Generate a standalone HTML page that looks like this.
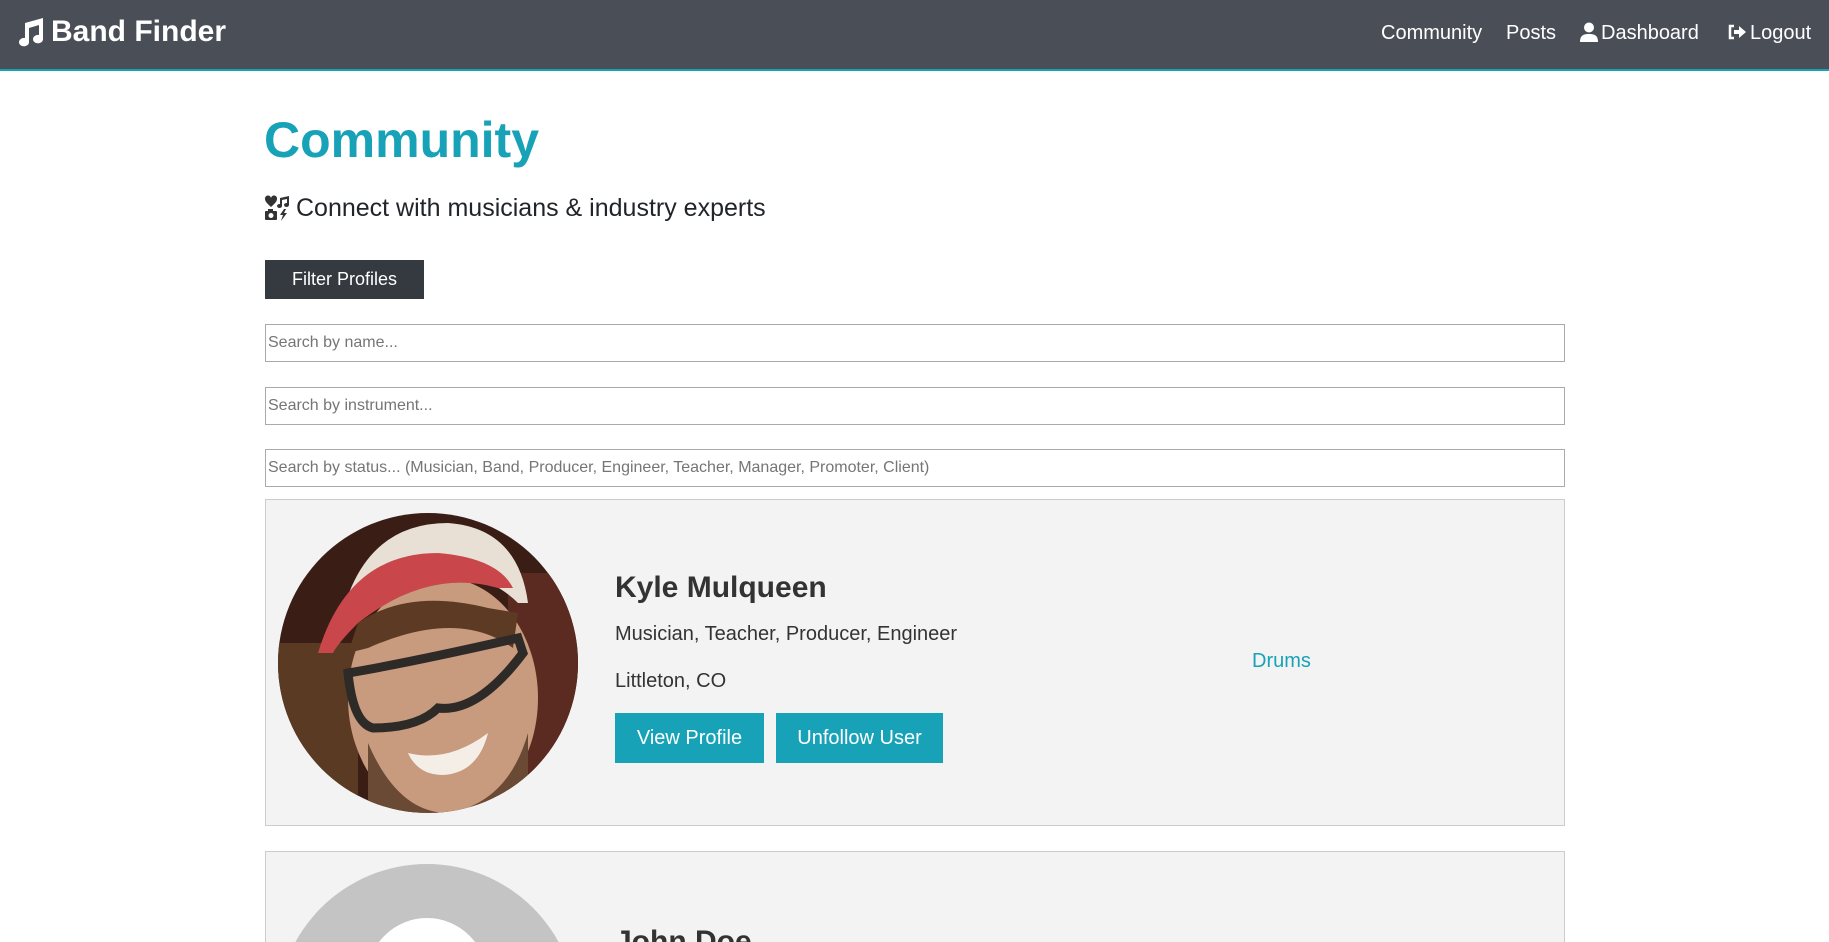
<!DOCTYPE html>
<html style="overflow:hidden;height:942px"><head><meta charset="utf-8"><style>
*{box-sizing:border-box;margin:0;padding:0}
body{width:1829px;height:942px;overflow:hidden;background:#fff;font-family:"Liberation Sans",Arial,sans-serif;color:#212529;position:relative}
.hdr{position:absolute;left:0;top:0;width:1829px;height:71px;background:#4a4f57;border-bottom:2px solid #17a2b8}
.logo{position:absolute;left:15px;top:15px;color:#fff;font-weight:bold;font-size:30px;display:flex;align-items:center;gap:6px}
.nav{position:absolute;top:21px;color:#fff;font-size:20px;line-height:24px}
h1{position:absolute;left:264px;top:110px;font-size:50px;color:#17a2b8;font-weight:bold;line-height:60px}
.sub{position:absolute;left:264px;top:193px;font-size:25px;line-height:30px;color:#212529;display:flex;align-items:center;gap:6px}
.fbtn{position:absolute;left:265px;top:260px;width:159px;height:39px;background:#343a40;color:#fff;font-size:18px;line-height:39px;text-align:center}
.inp{position:absolute;left:265px;width:1300px;height:38px;border:1px solid #aaa;font-size:16px;color:#757575;padding-left:2px;line-height:36px;background:#fff}
.card{position:absolute;left:265px;width:1300px;background:#f3f3f3;border:1px solid #ccc;overflow:hidden}
.name{position:absolute;font-weight:bold;font-size:30px;color:#333}
.t{position:absolute;font-size:20px;color:#333}
.btn{position:absolute;top:713px;height:50px;background:#17a2b8;color:#fff;font-size:20px;line-height:50px;text-align:center}
</style></head><body>
<div class="hdr">
 <div class="logo"><svg width="30" height="30" viewBox="0 0 30 30"><path fill="#fff" d="M10 6 L28 1 L28 22 A5 4.2 0 1 1 24 18 L24 8 L14 11 L14 25 A5 4.2 0 1 1 10 21 Z"/></svg>Band Finder</div>
 <div class="nav" style="left:1381px">Community</div>
 <div class="nav" style="left:1506px">Posts</div>
 <div class="nav" style="left:1580px;display:flex;align-items:center;gap:3px"><svg width="18" height="20" viewBox="0 0 18 20" style="margin-top:-2px"><circle cx="9" cy="5.5" r="5" fill="#fff"/><path fill="#fff" d="M0 20 C0 13 4 12 9 12 C14 12 18 13 18 20 Z"/></svg>Dashboard</div>
 <div class="nav" style="left:1727px;display:flex;align-items:center;gap:3px"><svg width="20" height="18" viewBox="0 0 20 18" style="margin-top:-2px"><path fill="none" stroke="#fff" stroke-width="2.5" d="M7 3 H3 V15 H7"/><path fill="#fff" d="M7 7 H12 V3 L19 9 L12 15 V11 H7 Z"/></svg>Logout</div>
</div>
<h1>Community</h1>
<div class="sub"><svg width="26" height="26" viewBox="0 0 26 26"><path fill="#333" d="M1 4 a3 3 0 0 1 6 -1 a3 3 0 0 1 6 1 c0 3 -4 6 -6 8 c-2 -2 -6 -5 -6 -8z"/><path fill="#333" d="M16 3 L25 1 L25 10 A2.5 2 0 1 1 23 8 L23 4 L18 5 L18 11 A2.5 2 0 1 1 16 9Z"/><rect x="1" y="16" width="12" height="9" rx="1" fill="#333"/><rect x="4" y="14" width="5" height="3" fill="#333"/><circle cx="7" cy="20.5" r="2.5" fill="#fff"/><path fill="#333" d="M20 14 L16 20 H19 L17 26 L23 18 H20 L22 14Z"/></svg>Connect with musicians &amp; industry experts</div>
<div class="fbtn">Filter Profiles</div>
<div class="inp" style="top:324px">Search by name...</div>
<div class="inp" style="top:387px">Search by instrument...</div>
<div class="inp" style="top:449px">Search by status... (Musician, Band, Producer, Engineer, Teacher, Manager, Promoter, Client)</div>
<div class="card" style="top:499px;height:327px"></div>
<svg style="position:absolute;left:278px;top:513px" width="300" height="300" viewBox="0 0 300 300">
<defs><clipPath id="c"><circle cx="150" cy="150" r="150"/></clipPath></defs>
<g clip-path="url(#c)">
<rect width="300" height="300" fill="#3a1d14"/>
<rect x="0" y="130" width="80" height="170" fill="#5a3a22"/>
<rect x="230" y="60" width="70" height="200" fill="#5b2a20"/>
<ellipse cx="165" cy="185" rx="95" ry="120" fill="#c89a7e"/>
<path d="M60 120 Q80 10 170 10 Q240 15 250 90 L240 90 Q200 50 120 60 Q80 75 60 120Z" fill="#e8e0d4"/>
<path d="M40 140 Q70 40 160 40 Q220 45 235 75 L220 75 Q150 55 80 110 Q60 130 55 140Z" fill="#c9474a"/>
<path d="M70 140 L80 110 Q130 75 210 95 L240 100 L235 135 Q180 95 90 135Z" fill="#5c3a24"/>
<path d="M70 160 Q130 150 240 125 L245 140 Q200 200 160 195 Q140 215 95 215 Q75 210 70 160Z" fill="none" stroke="#2d2a28" stroke-width="9"/>
<path d="M130 240 Q170 250 210 220 Q200 260 165 262 Q140 262 130 240Z" fill="#f5eee6"/>
<path d="M90 230 Q120 300 170 300 Q230 290 250 220 L250 300 L90 300Z" fill="#6b4a35"/>
</g></svg>
<div class="name" style="left:615px;top:571px">Kyle Mulqueen</div>
<div class="t" style="left:615px;top:623px">Musician, Teacher, Producer, Engineer</div>
<div class="t" style="left:615px;top:670px">Littleton, CO</div>
<div class="t" style="left:1252px;top:650px;color:#17a2b8">Drums</div>
<div class="btn" style="left:615px;width:149px">View Profile</div>
<div class="btn" style="left:776px;width:167px">Unfollow User</div>
<svg style="position:absolute;left:265px;top:851px;display:block" width="1300" height="91" viewBox="0 0 1300 91">
 <rect x="0.5" y="0.5" width="1299" height="95" fill="#f3f3f3" stroke="#ccc"/>
 <circle cx="162" cy="163" r="150" fill="#c4c4c4"/>
 <circle cx="162" cy="127" r="60" fill="#fff"/>
 <text x="350" y="100" font-family="Liberation Sans, Arial, sans-serif" font-weight="bold" font-size="30" fill="#333">John Doe</text>
</svg>
</body></html>
